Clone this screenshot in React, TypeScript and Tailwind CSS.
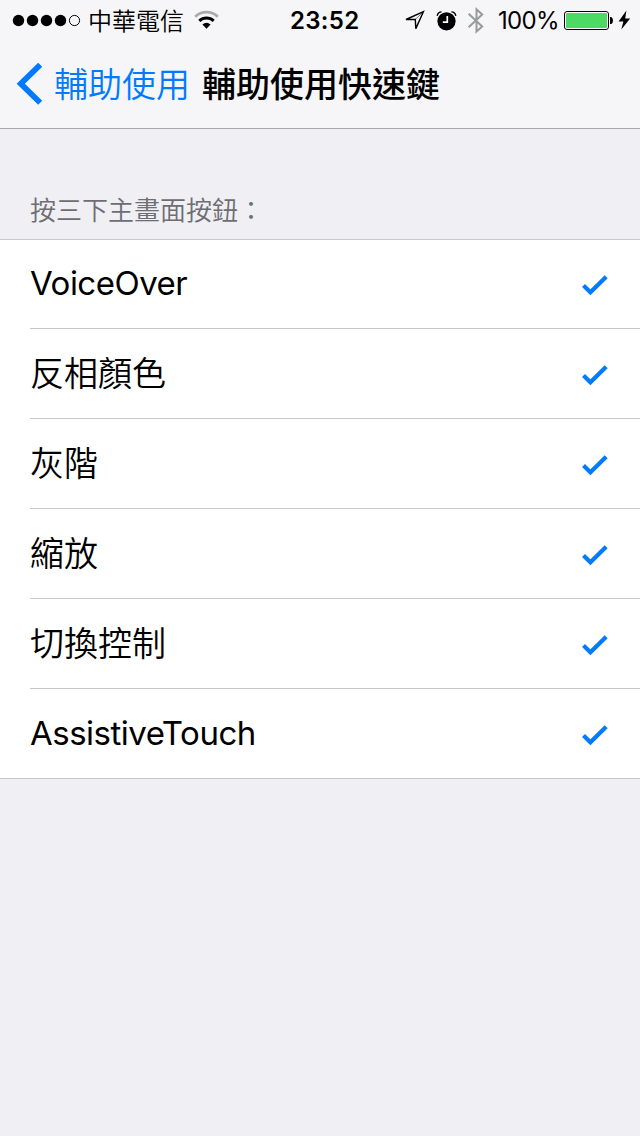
const shortcuts = ['VoiceOver', '反相顏色', '灰階', '縮放', '切換控制', 'AssistiveTouch'];

function SignalDots() {
  return (
    <svg className="ml-[12px] h-[13px] w-[70px] shrink-0" viewBox="12 14 70 13" aria-hidden="true">
      <circle cx="18.5" cy="20.5" r="5.7" />
      <circle cx="32.5" cy="20.5" r="5.7" />
      <circle cx="46.5" cy="20.5" r="5.7" />
      <circle cx="60.5" cy="20.5" r="5.7" />
      <circle cx="74.5" cy="20.5" r="5.1" fill="none" stroke="black" strokeWidth="1" />
    </svg>
  );
}

function WifiIcon() {
  return (
    <svg className="ml-[8px] h-[20px] w-[26px] shrink-0" viewBox="193 10 26 20" fill="none" aria-hidden="true">
      <path d="M195.2 16.8C201.5 10.7 211.5 10.7 217.8 16.8" stroke="#ababad" strokeWidth="2.8" />
      <path d="M199.3 20.9C203.5 17.1 209.5 17.1 213.7 20.9" stroke="black" strokeWidth="3" />
      <path d="M202.4 24.5Q206.5 21.1 210.6 24.5L206.5 28.7Z" fill="black" />
    </svg>
  );
}

function LocationIcon() {
  return (
    <svg className="h-[21px] w-[22px] shrink-0" viewBox="403 9 22 21" fill="none" stroke="black" strokeWidth="1.4" aria-hidden="true">
      <path d="M423.4 10.7L406 18.5H415.3L415.8 27.6Z" />
      <path d="M423.4 10.7L415.3 18.5" strokeWidth="0.5" />
    </svg>
  );
}

function AlarmIcon() {
  return (
    <svg className="ml-[11px] h-[21px] w-[21px] shrink-0" viewBox="436 9 21 21" fill="none" aria-hidden="true">
      <circle cx="446.5" cy="20.3" r="9.1" fill="black" />
      <path d="M437.2 14.8Q437.8 11.1 441.6 10.9M451.4 10.9Q455.2 11.1 455.8 14.8" stroke="black" strokeWidth="1.4" />
      <path d="M447.3 15V21.2H442.8" stroke="white" strokeWidth="1.7" />
    </svg>
  );
}

function BluetoothIcon() {
  return (
    <svg className="ml-[10px] h-[28px] w-[18px] shrink-0" viewBox="467 6 18 28" fill="none" stroke="#999a9c" strokeWidth="2" aria-hidden="true">
      <path d="M468.6 13.8L482.2 26.4L476.5 31.6V9.2L482.2 14.6L468.6 27.3" />
    </svg>
  );
}

function BatteryIcon() {
  return (
    <svg className="h-[20px] w-[68px] shrink-0" viewBox="563 10 68 20" aria-hidden="true">
      <rect x="564.5" y="11.5" width="44" height="18" rx="2.5" fill="white" stroke="black" />
      <rect x="566" y="13" width="41" height="15" rx="1" fill="#4cd964" />
      <path d="M610 17H611.2Q613 17.6 613 20.5T611.2 24H610Z" />
      <path d="M626.4 10.5L618.6 21.4H623.4L621.3 29.5L630.2 18.4H625.2Z" />
    </svg>
  );
}

function StatusBar() {
  return (
    <div className="flex h-10 items-center text-[24px] leading-[40px] whitespace-nowrap text-black">
      <div className="flex h-10 w-[290px] items-center">
        <SignalDots />
        <span className="ml-[6px] w-[97px] font-['Noto_Sans_CJK_TC',sans-serif] font-[350]">中華電信</span>
        <WifiIcon />
      </div>
      <span className="w-[113px] pt-[2px] font-['Inter',sans-serif] text-[24px] font-semibold tracking-[0.3px]">23:52</span>
      <LocationIcon />
      <AlarmIcon />
      <BluetoothIcon />
      <span className="ml-[13px] w-[65px] pt-[2px] font-['Inter',sans-serif] text-[24px] tracking-[-0.7px]">100%</span>
      <BatteryIcon />
    </div>
  );
}

function NavigationBar() {
  return (
    <div className="flex h-[88px] items-center text-[34px] leading-[88px] whitespace-nowrap">
      <button type="button" className="flex h-[88px] items-center text-[#007aff]">
        <svg className="ml-[16px] h-[44px] w-[28px]" viewBox="16 62 28 44" fill="none" stroke="currentColor" strokeWidth="5.8" aria-hidden="true">
          <path d="M40.2 64.8L20.8 83.8L40.2 102.8" />
        </svg>
        <span className="ml-[10px] w-[148px] pb-[2px] text-left font-['Noto_Sans_CJK_TC',sans-serif] font-[350]">輔助使用</span>
      </button>
      <h1 className="pb-[2px] font-['Noto_Sans_CJK_TC',sans-serif] font-medium text-black">輔助使用快速鍵</h1>
    </div>
  );
}

function ShortcutRow({ label }: { label: string }) {
  return (
    <li className="group flex h-[90px] items-stretch pl-[30px] first:h-[89px] last:h-[89px]">
      <div className="flex grow items-center justify-between border-b border-[#c8c7cc] pr-[32px] group-last:border-b-0">
        {/^[A-Z]/.test(label) ? (
          <span className="pb-[3px] font-['Inter',sans-serif] text-[33px] leading-[50px] tracking-[-0.5px] group-last:pb-px">{label}</span>
        ) : (
          <span className="pb-[3px] text-[34px] leading-[50px] font-[350]">{label}</span>
        )}
        <svg className="mt-[2px] h-[22px] w-[27px]" viewBox="581 274 27 22" fill="none" stroke="#007aff" strokeWidth="4.2" aria-hidden="true">
          <path d="M583.5 285.5L590.4 292.2L606.2 276.8" />
        </svg>
      </div>
    </li>
  );
}

export default function App() {
  return (
    <main className="h-[1136px] w-[640px] overflow-hidden bg-[#efeff4] font-['Noto_Sans_CJK_TC',sans-serif]">
      <header className="h-[129px] border-b border-[#a7a7aa] bg-[#f6f6f8]">
        <StatusBar />
        <NavigationBar />
      </header>
      <h2 className="h-[110px] pt-[61px] pl-[30px] text-[26px] leading-[38px] font-[350] text-[#6d6d72]">按三下主畫面按鈕：</h2>
      <ul className="border-y border-[#c8c7cc] bg-white text-black">
        {shortcuts.map((label) => (
          <ShortcutRow key={label} label={label} />
        ))}
      </ul>
    </main>
  );
}
